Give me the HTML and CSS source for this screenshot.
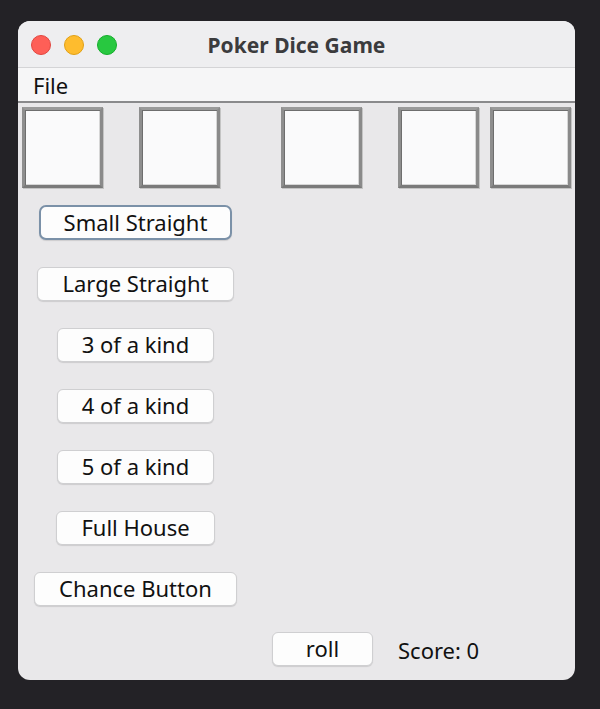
FILE: index.html
```html
<!DOCTYPE html>
<html>
<head>
<meta charset="utf-8">
<link rel="stylesheet" href="styles.css">
</head>
<body>
<div class="window">
  <div class="titlebar">
    <div class="lights">
      <span class="light red"></span>
      <span class="light yellow"></span>
      <span class="light green"></span>
    </div>
    <div class="title">Poker Dice Game</div>
    <div></div>
  </div>
  <div class="menubar"><span class="menu">File</span></div>
  <div class="content">
    <div class="dice">
      <div class="die d1"></div>
      <div class="die d2"></div>
      <div class="die d3"></div>
      <div class="die d4"></div>
      <div class="die d5"></div>
    </div>
    <div class="buttons">
      <button class="btn focused">Small Straight</button>
      <button class="btn">Large Straight</button>
      <button class="btn">3 of a kind</button>
      <button class="btn">4 of a kind</button>
      <button class="btn">5 of a kind</button>
      <button class="btn">Full House</button>
      <button class="btn">Chance Button</button>
    </div>
    <div class="bottom">
      <button class="btn roll">roll</button>
      <span class="score">Score: 0</span>
    </div>
  </div>
</div>
</body>
</html>
```
FILE: styles.css
```css
html, body {
  margin: 0;
  padding: 0;
}
body {
  background: #232226;
  width: 600px;
  height: 709px;
  overflow: hidden;
  font-family: "Noto Sans", "DejaVu Sans", sans-serif;
}
.window {
  margin: 21px 0 0 18px;
  width: 557px;
  height: 659px;
  border-radius: 12px;
  overflow: hidden;
  background: #e9e8ea;
  display: flex;
  flex-direction: column;
}
.titlebar {
  height: 46px;
  flex: none;
  background: #eeeef0;
  border-bottom: 1px solid #d4d4d6;
  display: grid;
  grid-template-columns: 1fr auto 1fr;
  align-items: center;
}
.lights {
  display: flex;
  gap: 13px;
  padding-left: 13px;
  padding-top: 1px;
}
.light {
  width: 20px;
  height: 20px;
  border-radius: 50%;
  box-sizing: border-box;
}
.red { background: #fe5f57; border: 1px solid #e2463f; }
.yellow { background: #febc2e; border: 1px solid #e1a014; }
.green { background: #28c840; border: 1px solid #14ae2b; }
.title {
  font-weight: bold;
  font-size: 21px;
  color: #3b3b3d;
  padding-top: 1px;
}
.menubar {
  height: 33px;
  flex: none;
  background: #f6f6f7;
  border-bottom: 2px solid #8a8a8c;
  padding-left: 15px;
  display: flex;
  align-items: center;
}
.menu {
  font-size: 22px;
  color: #111;
  padding-top: 1px;
}
.content {
  flex: 1;
  display: flex;
  flex-direction: column;
}
.dice {
  display: flex;
  padding: 4px 0 0 4px;
}
.die {
  width: 81px;
  height: 81px;
  box-sizing: border-box;
  background: #fafafb;
  border: 3px solid;
  border-color: #9a9a9a #8a8a8a #7a7a7a #8e8e8e;
  box-shadow: inset 1px 1px 0 #6e6e6e, inset -1px -1px 0 #d6d6d6, 1px 1px 0 #c4c4c4;
}
.d2 { margin-left: 36px; }
.d3 { margin-left: 61px; }
.d4 { margin-left: 36px; }
.d5 { margin-left: 11px; }
.buttons {
  width: 235px;
  margin-top: 18px;
  display: flex;
  flex-direction: column;
  align-items: center;
  gap: 27px;
}
.btn {
  font-family: "Noto Sans", "DejaVu Sans", sans-serif;
  font-size: 22px;
  color: #111;
  height: 34px;
  padding: 0 24px 2px;
  background: #fdfdfd;
  border: 1px solid #cfcfd1;
  border-radius: 6px;
  box-shadow: 0 1px 1px rgba(0, 0, 0, 0.12);
  line-height: 28px;
  margin: 0;
}
.btn.focused {
  border: 2px solid #7b91a8;
  border-radius: 7px;
  height: 35px;
  margin-top: -1px;
  padding: 0 23px 2px;
}
.bottom {
  display: flex;
  align-items: center;
  margin-top: 26px;
  padding-left: 254px;
}
.roll {
  width: 101px;
  padding: 0 0 2px;
}
.score {
  margin-left: 25px;
  font-size: 22px;
  color: #111;
  padding-top: 2px;
}
```
